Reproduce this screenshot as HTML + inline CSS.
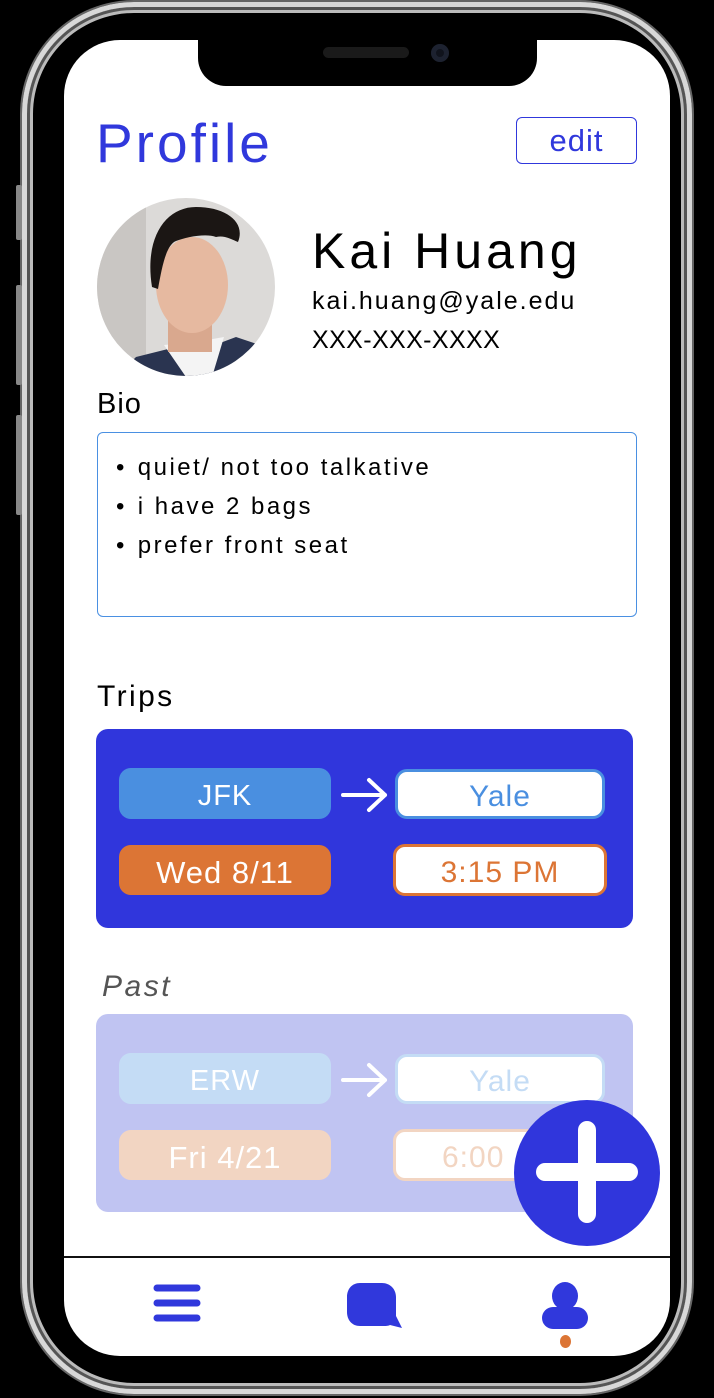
<!DOCTYPE html>
<html><head><meta charset="utf-8"><style>
*{margin:0;padding:0;box-sizing:border-box}
body{width:714px;height:1398px;background:#000;position:relative;overflow:hidden;font-family:"Liberation Sans",sans-serif}
.abs{position:absolute}
.rim{left:22px;top:2px;width:670px;height:1392px;border-radius:112px;border:5px solid #d8d8d8;box-shadow:inset 0 0 0 3px #555,inset 0 0 0 6px #bbb,0 0 0 2px #666}
.screen{left:64px;top:40px;width:606px;height:1316px;border-radius:56px;background:#fff;overflow:hidden}
.notch{left:134px;top:0;width:339px;height:46px;background:#000;border-radius:0 0 28px 28px}
.t{position:absolute;white-space:nowrap;line-height:1}
.pill{position:absolute;border-radius:12px;display:flex;align-items:center;justify-content:center;font-size:29px;padding-top:5px;letter-spacing:1px}
</style></head><body>
<div class="abs rim"></div>
<div class="abs" style="left:16px;top:185px;width:6px;height:55px;background:#888;border-radius:2px"></div>
<div class="abs" style="left:16px;top:285px;width:6px;height:100px;background:#888;border-radius:2px"></div>
<div class="abs" style="left:16px;top:415px;width:6px;height:100px;background:#888;border-radius:2px"></div>
<div class="abs screen">
  <div class="abs notch"></div>
  <div class="abs" style="left:259px;top:7px;width:86px;height:11px;border-radius:6px;background:#1a1a1a"></div>
  <div class="abs" style="left:367px;top:4px;width:18px;height:18px;border-radius:50%;background:#10131c;box-shadow:inset 0 0 0 5px #1d2230"></div>

  <div class="t" style="left:32px;top:76px;font-size:55px;color:#3038dc;letter-spacing:3px">Profile</div>
  <div class="abs" style="left:452px;top:77px;width:121px;height:47px;border:1.5px solid #3038dc;border-radius:6px;color:#3038dc;font-size:31px;display:flex;align-items:center;justify-content:center;letter-spacing:1px">edit</div>

  <svg class="abs" style="left:32px;top:157px" width="180" height="180" viewBox="0 0 180 180">
    <defs><clipPath id="c"><circle cx="90" cy="90" r="89"/></clipPath></defs>
    <g clip-path="url(#c)">
      <rect width="180" height="180" fill="#dcdad8"/>
      <rect x="0" width="50" height="180" fill="#c9c6c3"/>
      <path d="M20 180 L40 160 L80 150 L100 155 L140 140 L170 150 L180 180Z" fill="#2a3450"/>
      <path d="M68 148 L90 180 L116 180 L128 140 L100 145Z" fill="#f4f4f4"/>
      <rect x="72" y="120" width="44" height="35" fill="#d9a88e"/>
      <ellipse cx="96" cy="88" rx="36" ry="48" fill="#e6b9a0"/>
      <path d="M56 90 C48 40 70 10 100 10 C130 10 150 25 142 45 C135 42 128 38 120 40 C110 36 90 40 80 44 C70 48 66 70 62 92Z" fill="#1b1614"/>
    </g>
  </svg>

  <div class="t" style="left:248px;top:186px;font-size:50px;color:#000;letter-spacing:4px">Kai Huang</div>
  <div class="t" style="left:248px;top:249px;font-size:25px;color:#000;letter-spacing:2px">kai.huang@yale.edu</div>
  <div class="t" style="left:248px;top:288px;font-size:25px;color:#000;letter-spacing:0.4px">XXX-XXX-XXXX</div>

  <div class="t" style="left:33px;top:350px;font-size:29px;color:#000;letter-spacing:1px">Bio</div>
  <div class="abs" style="left:33px;top:392px;width:540px;height:185px;border:1.5px solid #4a90e2;border-radius:6px"></div>
  <div class="t" style="left:52px;top:408px;font-size:24px;color:#000;line-height:39px">
    <div>•&nbsp;&nbsp;<span style="letter-spacing:2.5px">quiet/ not too talkative</span></div>
    <div>•&nbsp;&nbsp;<span style="letter-spacing:2.5px">i have 2 bags</span></div>
    <div>•&nbsp;&nbsp;<span style="letter-spacing:2.5px">prefer front seat</span></div>
  </div>

  <div class="t" style="left:33px;top:642px;font-size:30px;color:#000;letter-spacing:2.4px">Trips</div>
  <div class="abs" style="left:32px;top:689px;width:537px;height:199px;background:#3036dc;border-radius:12px"></div>
  <div class="pill" style="left:55px;top:728px;width:212px;height:51px;background:#4a8fe0;color:#fff">JFK</div>
  <svg class="abs" style="left:276px;top:737px" width="50" height="36"><path d="M3 18H45M29 3L45 18L29 33" stroke="#fff" stroke-width="4" fill="none" stroke-linecap="round" stroke-linejoin="round"/></svg>
  <div class="pill" style="left:331px;top:729px;width:210px;height:50px;background:#fff;border:3px solid #4a8fe0;color:#4a8fe0;font-size:30px">Yale</div>
  <div class="pill" style="left:55px;top:805px;width:212px;height:50px;background:#dc7535;color:#fff;font-size:31px">Wed 8/11</div>
  <div class="pill" style="left:329px;top:804px;width:214px;height:52px;background:#fff;border:3px solid #dc7535;color:#dc7535;font-size:30px">3:15 PM</div>

  <div class="t" style="left:38px;top:932px;font-size:30px;color:#555;font-style:italic;letter-spacing:2.5px">Past</div>
  <div class="abs" style="left:32px;top:974px;width:537px;height:198px;background:#c0c4f2;border-radius:12px"></div>
  <div class="pill" style="left:55px;top:1013px;width:212px;height:51px;background:#c4dcf5;color:#fff">ERW</div>
  <svg class="abs" style="left:276px;top:1022px" width="50" height="36"><path d="M3 18H45M29 3L45 18L29 33" stroke="#fff" stroke-width="4" fill="none" stroke-linecap="round" stroke-linejoin="round"/></svg>
  <div class="pill" style="left:331px;top:1014px;width:210px;height:50px;background:#fff;border:3px solid #c4dcf5;color:#c4dcf5;font-size:30px">Yale</div>
  <div class="pill" style="left:55px;top:1090px;width:212px;height:50px;background:#f2d5c2;color:#fff;font-size:31px">Fri 4/21</div>
  <div class="pill" style="left:329px;top:1089px;width:214px;height:52px;background:#fff;border:3px solid #f2d5c2;color:#f2d5c2;font-size:30px;justify-content:flex-start;padding-left:46px">6:00</div>

  <div class="abs" style="left:450px;top:1060px;width:146px;height:146px;border-radius:50%;background:#3036dc"></div>
  <svg class="abs" style="left:450px;top:1060px" width="146" height="146"><path d="M73 30V114M31 72H115" stroke="#fff" stroke-width="18" stroke-linecap="round"/></svg>

  <div class="abs" style="left:0;top:1216px;width:606px;height:2px;background:#111"></div>
  <svg class="abs" style="left:89px;top:1244px" width="48" height="38"><path d="M4 4H44M4 19H44M4 34H44" stroke="#3038dc" stroke-width="7" stroke-linecap="round"/></svg>
  <svg class="abs" style="left:282px;top:1242px" width="60" height="48"><path d="M14 1H36C44 1 50 7 50 15V34L56 46L44 43C42 44 40 44 36 44H14C6 44 1 38 1 30V15C1 7 6 1 14 1Z" fill="#3038dc"/></svg>
  <svg class="abs" style="left:476px;top:1242px" width="50" height="48"><ellipse cx="25" cy="14" rx="13" ry="14" fill="#3038dc"/><rect x="2" y="25" width="46" height="22" rx="11" fill="#3038dc"/></svg>
  <div class="abs" style="left:496px;top:1295px;width:11px;height:13px;border-radius:50%;background:#dc7535"></div>
</div>
</body></html>
